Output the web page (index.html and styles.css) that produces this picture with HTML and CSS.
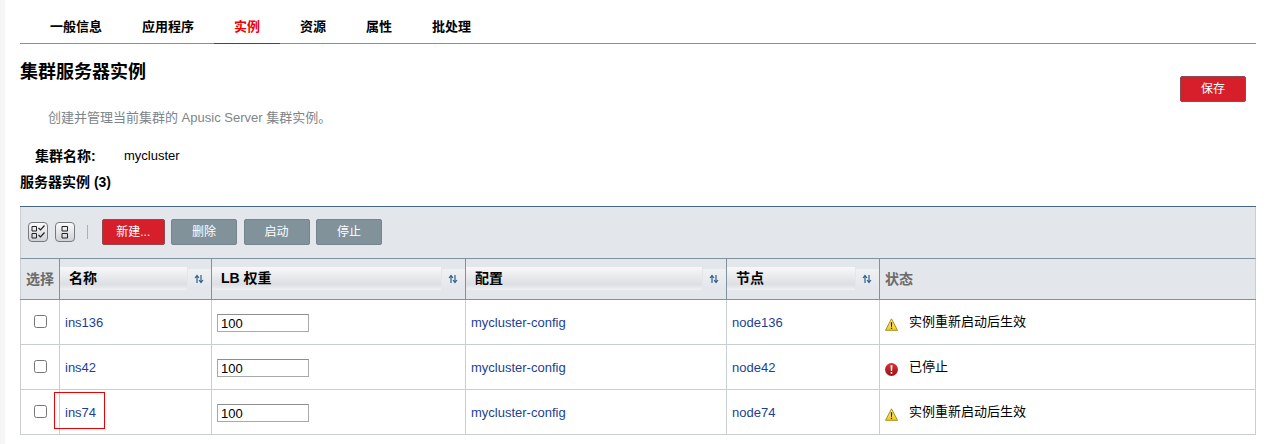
FILE: index.html
```html
<!DOCTYPE html>
<html lang="zh-CN">
<head>
<meta charset="utf-8">
<title>集群服务器实例</title>
<link rel="stylesheet" href="styles.css">
</head>
<body>
<svg class="sprites" aria-hidden="true">
  <defs>
    <linearGradient id="errfill" x1="0" y1="0" x2="0" y2="1"><stop offset="0" stop-color="#d8353a"/><stop offset="1" stop-color="#9c0f16"/></linearGradient>
    <linearGradient id="warnfill" x1="0" y1="0" x2="0" y2="1"><stop offset="0" stop-color="#fdf08a"/><stop offset="1" stop-color="#f2c81e"/></linearGradient>
    <symbol id="sort" viewBox="0 0 10 10">
      <path d="M3 9V2M1 4l2-2.500L5 4" fill="none" stroke="#2f5f8f" stroke-width="1.200"/>
      <path d="M7 1v7M5 6l2 2.500L9 6" fill="none" stroke="#2f5f8f" stroke-width="1.200"/>
    </symbol>
    <symbol id="warn" viewBox="0 0 13 13">
      <path d="M6.500.8 12.500 12.300H.5z" fill="url(#warnfill)" stroke="#a8901f"/>
      <path d="M5.800 4.200h1.400L6.900 9h-.8zM5.900 9.700h1.200V11H5.900z" fill="#222"/>
    </symbol>
    <symbol id="err" viewBox="0 0 13 13">
      <circle cx="6.500" cy="6.500" r="6.500" fill="url(#errfill)"/>
      <path d="M5.500 2.300h2L7.100 8H5.900zM5.700 9h1.600v1.700H5.700z" fill="#fff"/>
    </symbol>
  </defs>
</svg>
<div class="page">
  <nav class="tabs">
    <a class="tab">一般信息</a>
    <a class="tab">应用程序</a>
    <a class="tab active">实例</a>
    <a class="tab">资源</a>
    <a class="tab">属性</a>
    <a class="tab">批处理</a>
  </nav>
  <header class="head">
    <h1>集群服务器实例</h1>
    <button class="btn primary save">保存</button>
  </header>
  <p class="desc">创建并管理当前集群的 Apusic Server 集群实例。</p>
  <div class="name-row"><span class="name-label">集群名称:</span><span>mycluster</span></div>
  <h2>服务器实例 (3)</h2>
  <div class="tbl">
    <div class="toolbar">
      <span class="icon-btn"><svg width="14" height="14" viewBox="0 0 14 14"><path d="M1 1.500h4.500v4.500H1zM1 8.500h4.500v4.500H1z" fill="none" stroke="#222"/><path d="M7.500 3l2 2 4-4.500M7.500 10l2 2 4-4.500" fill="none" stroke="#222" stroke-width="1.200"/></svg></span>
      <span class="icon-btn"><svg width="8" height="14" viewBox="0 0 8 14"><path d="M1 1.500h5.500v4.500H1zM1 8.500h5.500v4.500H1z" fill="none" stroke="#222"/></svg></span>
      <span class="sep"></span>
      <button class="btn primary new">新建...</button>
      <button class="btn muted">删除</button>
      <button class="btn muted">启动</button>
      <button class="btn muted">停止</button>
    </div>
    <table>
      <colgroup><col class="c1"><col class="c2"><col class="c3"><col class="c4"><col class="c5"><col></colgroup>
      <thead>
        <tr>
          <th class="plain">选择</th>
          <th><div class="sortable"><span class="sort-label">名称</span><span class="sort-btn"><svg width="10" height="10"><use href="#sort"/></svg></span></div></th>
          <th><div class="sortable"><span class="sort-label">LB 权重</span><span class="sort-btn"><svg width="10" height="10"><use href="#sort"/></svg></span></div></th>
          <th><div class="sortable"><span class="sort-label">配置</span><span class="sort-btn"><svg width="10" height="10"><use href="#sort"/></svg></span></div></th>
          <th><div class="sortable"><span class="sort-label">节点</span><span class="sort-btn"><svg width="10" height="10"><use href="#sort"/></svg></span></div></th>
          <th class="plain left">状态</th>
        </tr>
      </thead>
      <tbody>
        <tr>
          <td class="center"><span class="check"></span></td>
          <td><a>ins136</a></td>
          <td><span class="field">100</span></td>
          <td><a>mycluster-config</a></td>
          <td><a>node136</a></td>
          <td><span class="status"><svg width="13" height="13"><use href="#warn"/></svg>实例重新启动后生效</span></td>
        </tr>
        <tr>
          <td class="center"><span class="check"></span></td>
          <td><a>ins42</a></td>
          <td><span class="field">100</span></td>
          <td><a>mycluster-config</a></td>
          <td><a>node42</a></td>
          <td><span class="status"><svg width="13" height="13"><use href="#err"/></svg>已停止</span></td>
        </tr>
        <tr>
          <td class="center"><span class="check"></span></td>
          <td class="marked"><a>ins74</a><span class="annot"></span></td>
          <td><span class="field">100</span></td>
          <td><a>mycluster-config</a></td>
          <td><a>node74</a></td>
          <td><span class="status"><svg width="13" height="13"><use href="#warn"/></svg>实例重新启动后生效</span></td>
        </tr>
      </tbody>
    </table>
  </div>
</div>
</body>
</html>
```

FILE: styles.css
```css
* { box-sizing: border-box; }
html, body { margin: 0; height: 100%; overflow: hidden; }
body {
  background: #fff;
  color: #000;
  font: 13px/16px "Liberation Sans", "Noto Sans CJK SC", sans-serif;
  border-left: 5px solid #f6f6f6;
}
.sprites { width: 0; height: 0; display: block; }
.page { padding: 0 15px 0 15px; }

.tabs {
  display: flex;
  height: 44px;
  padding: 19px 0 0 10px;
  border-bottom: 1px solid #8a8f94;
}
.tab {
  height: 25px;
  padding: 0 20px;
  color: #000;
  font-weight: bold;
  line-height: 16px;
}
.tab.active { color: #f00000; border-bottom: 1px solid #f00000; }

.head { display: flex; justify-content: space-between; align-items: flex-start; height: 58px; }
h1 { margin: 16px 0 0; font-size: 18px; line-height: 24px; font-weight: bold; }
.save { margin: 32px 10px 0 0; }

.btn {
  flex: none;
  height: 26px;
  width: 66px;
  padding: 0;
  border: 1px solid #6f7a80;
  border-radius: 2px;
  color: #fff;
  font: 12px/16px "Liberation Sans", "Noto Sans CJK SC", sans-serif;
}
.primary { background: #d61f2b; border-color: #8f4a4f; }
.muted { background: #82929b; border-color: #75858e; }
.new { width: 62.500px; margin-left: 7.500px; }

.desc { margin: 8px 0 0 28px; height: 16px; color: #7d8589; font-size: 13px; }
.name-row { display: flex; margin: 22px 0 0 15px; height: 16px; }
.name-label { width: 89px; font-size: 14px; font-weight: bold; }
h2 { margin: 10px 0 0; font-size: 14px; line-height: 16px; font-weight: bold; }

.tbl { margin-top: 16px; border-top: 1px solid #45647f; }
.toolbar {
  display: flex;
  align-items: center;
  height: 52px;
  padding: 0 0 1px 7px;
  background: #e3e6eb;
  border-left: 1px solid #c8ced3;
  border-right: 1px solid #c8ced3;
  border-bottom: 1px solid #7e929f;
  gap: 6.500px;
}
.icon-btn {
  display: flex;
  align-items: center;
  justify-content: center;
  width: 20px;
  height: 20px;
  border: 1px solid #77797c;
  border-radius: 4px;
  background: linear-gradient(#fafafa, #cfd2d6);
}
.icon-btn + .icon-btn { margin-left: .5px; }
.sep { width: 1px; height: 14px; background: #aab0b5; margin-left: 5.500px; }

table { width: 100%; border-collapse: collapse; table-layout: fixed; }
.c1 { width: 39px; }
.c2 { width: 152px; }
.c3 { width: 254px; }
.c4 { width: 261px; }
.c5 { width: 153px; }

th {
  height: 40px;
  padding: 0;
  background: #e3e6eb;
  border: 1px solid #7e929f;
  border-top: 0;
  font-size: 14px;
  font-weight: bold;
  text-align: left;
}
th.plain { color: #6b6b6b; text-align: center; }
th.left { text-align: left; padding-left: 5px; border-right-color: #c8ced3; }
th:first-child { border-left-color: #c8ced3; }
.sortable { display: flex; align-items: center; height: 100%; }
.sort-label {
  flex: 1;
  height: 23px;
  padding: 3px 0 0 9px;
  line-height: 16px;
  background: linear-gradient(#f8f8f9, #dcdfe3 75%, #eef0f2);
}
.sort-btn {
  display: flex;
  align-items: center;
  justify-content: center;
  width: 23px;
  height: 19px;
  margin-left: 1px;
  background: linear-gradient(#f0f1f3, #e3e6eb);
}
.sort-btn svg { margin-left: -2px; }

td {
  height: 45px;
  padding: 0 0 0 5px;
  border: 1px solid #c8ced3;
  vertical-align: middle;
}
td.center { padding: 0 0 2px; text-align: center; }
a { color: #1c3f94; }
td a { display: block; margin-top: 3px; }
.check {
  display: inline-block;
  width: 13px;
  height: 13px;
  vertical-align: middle;
  border: 1px solid #767676;
  border-radius: 2.500px;
  background: #fff;
}
.field {
  display: block;
  width: 92px;
  height: 18px;
  padding-left: 3px;
  line-height: 17px;
  border: 1px solid #a9a9a9;
  border-top-color: #8e8e8e;
  background: #fff;
  font-size: 13px;
  margin-top: 2px;
}
.status { display: flex; align-items: center; gap: 11px; }
.status svg { margin-top: 5px; flex: none; }
.marked { position: relative; }
.annot {
  position: absolute;
  left: -6px;
  top: 2px;
  width: 51px;
  height: 37px;
  border: 1px solid #f00000;
}
```
